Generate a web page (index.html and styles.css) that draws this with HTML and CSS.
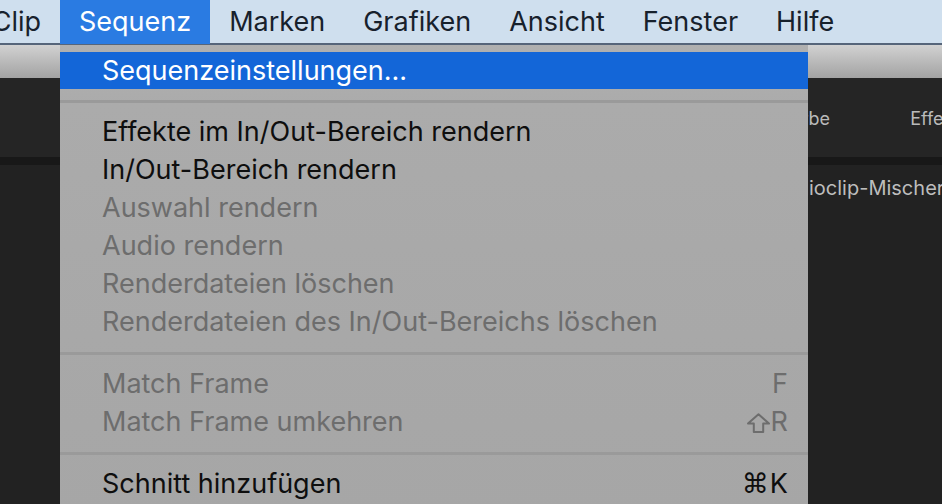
FILE: index.html
```html
<!DOCTYPE html>
<html lang="de">
<head>
<meta charset="utf-8">
<title>Sequenz-Menü</title>
<link rel="stylesheet" href="styles.css">
</head>
<body>
<header class="menubar">
  <span class="mb-item mb-first">Clip</span>
  <span class="mb-item mb-active">Sequenz</span>
  <span class="mb-item">Marken</span>
  <span class="mb-item">Grafiken</span>
  <span class="mb-item">Ansicht</span>
  <span class="mb-item">Fenster</span>
  <span class="mb-item">Hilfe</span>
</header>

<div class="window">
  <div class="titlebar"></div>
  <div class="wsbar">
    <span class="ws">Audio</span>
    <span class="ws">Farbe</span>
    <span class="ws">Effekte</span>
  </div>
  <div class="divider"></div>
  <div class="panel">
    <div class="panel-tabs">
      <span class="ptab">Quelle</span>
      <span class="ptab">Audioclip-Mischer</span>
    </div>
  </div>
</div>

<nav class="dropdown">
  <div class="item item-hl"><span class="label">Sequenzeinstellungen...</span></div>
  <div class="sep"></div>
  <div class="item"><span class="label">Effekte im In/Out-Bereich rendern</span></div>
  <div class="item"><span class="label">In/Out-Bereich rendern</span></div>
  <div class="item item-dis"><span class="label">Auswahl rendern</span></div>
  <div class="item item-dis"><span class="label">Audio rendern</span></div>
  <div class="item item-dis"><span class="label">Renderdateien löschen</span></div>
  <div class="item item-dis"><span class="label">Renderdateien des In/Out-Bereichs löschen</span></div>
  <div class="sep"></div>
  <div class="item item-dis"><span class="label">Match Frame</span><span class="key">F</span></div>
  <div class="item item-dis"><span class="label">Match Frame umkehren</span><span class="key"><svg class="shift" width="23" height="20" viewBox="0 0 23 20" aria-label="Umschalt"><path d="M11.5 1.2 L22 10.6 H16.2 V19 H6.8 V10.6 H1 Z" fill="none" stroke="currentColor" stroke-width="2" stroke-linejoin="round"/></svg>R</span></div>
  <div class="sep"></div>
  <div class="item"><span class="label">Schnitt hinzufügen</span><span class="key"><span class="sym">⌘</span>K</span></div>
</nav>
</body>
</html>
```
FILE: styles.css
```css
html, body {
  margin: 0;
  padding: 0;
}

body {
  width: 942px;
  height: 504px;
  overflow: hidden;
  position: relative;
  background: #222222;
  font-family: "Inter", "Noto Sans", sans-serif;
}

/* ---------- macOS menu bar ---------- */
.menubar {
  display: flex;
  height: 43px;
  background: #cfdfee;
  border-bottom: 2px solid #56657a;
  font-size: 27px;
  line-height: 43px;
  color: #17212c;
  white-space: nowrap;
}

.mb-item {
  padding: 0 19px;
}

.mb-first {
  width: 60px;
  box-sizing: border-box;
  display: flex;
  justify-content: flex-end;
  flex: 0 0 60px;
}

.mb-active {
  background: #2a7be2;
  color: #ffffff;
  margin-bottom: -1px;
}

/* ---------- application window behind ---------- */
.window {
  display: flex;
  flex-direction: column;
}

.titlebar {
  height: 33px;
  background: linear-gradient(#d2d2d2, #bcbcbc 45%, #a3a3a3);
}

.wsbar {
  height: 79px;
  box-sizing: border-box;
  background: #252525;
  display: flex;
  gap: 80px;
  padding: 30px 0 0 652px;
  font-size: 18px;
  line-height: 22px;
  color: #bababa;
  white-space: nowrap;
}

.divider {
  height: 8px;
  background: #181818;
}

.panel {
  flex: 1;
  background: #222222;
  height: 340px;
}

.panel-tabs {
  display: flex;
  gap: 40px;
  padding: 11px 0 0 671px;
  font-size: 20px;
  line-height: 24px;
  color: #bdbdbd;
  white-space: nowrap;
}

/* ---------- dropdown menu (overlay) ---------- */
.dropdown {
  position: absolute;
  left: 60px;
  top: 45px;
  width: 748px;
  height: 470px;
  box-sizing: border-box;
  padding-top: 7px;
  background: linear-gradient(#b0b0b0, #ababab 60px, #a9a9a9 200px, #a6a6a6);
  font-size: 27px;
  line-height: 38px;
  color: #0e0e0e;
}

.item {
  display: flex;
  justify-content: space-between;
  height: 38px;
  padding: 0 20px 0 42px;
  white-space: nowrap;
}

.item-hl {
  height: 37px;
  line-height: 37px;
  background: #1366d8;
  color: #ffffff;
}

.item-dis {
  color: #6d6d6d;
}

.key {
  display: flex;
  align-items: baseline;
}

.shift {
  align-self: center;
  margin-right: 1px;
  position: relative;
  top: 1px;
}

.sym {
  font-family: "DejaVu Sans", sans-serif;
  font-size: 27px;
  margin-right: 1px;
}

.sep {
  height: 3px;
  margin: 11px 0 10px;
  background: #9a9a9a;
}
```
